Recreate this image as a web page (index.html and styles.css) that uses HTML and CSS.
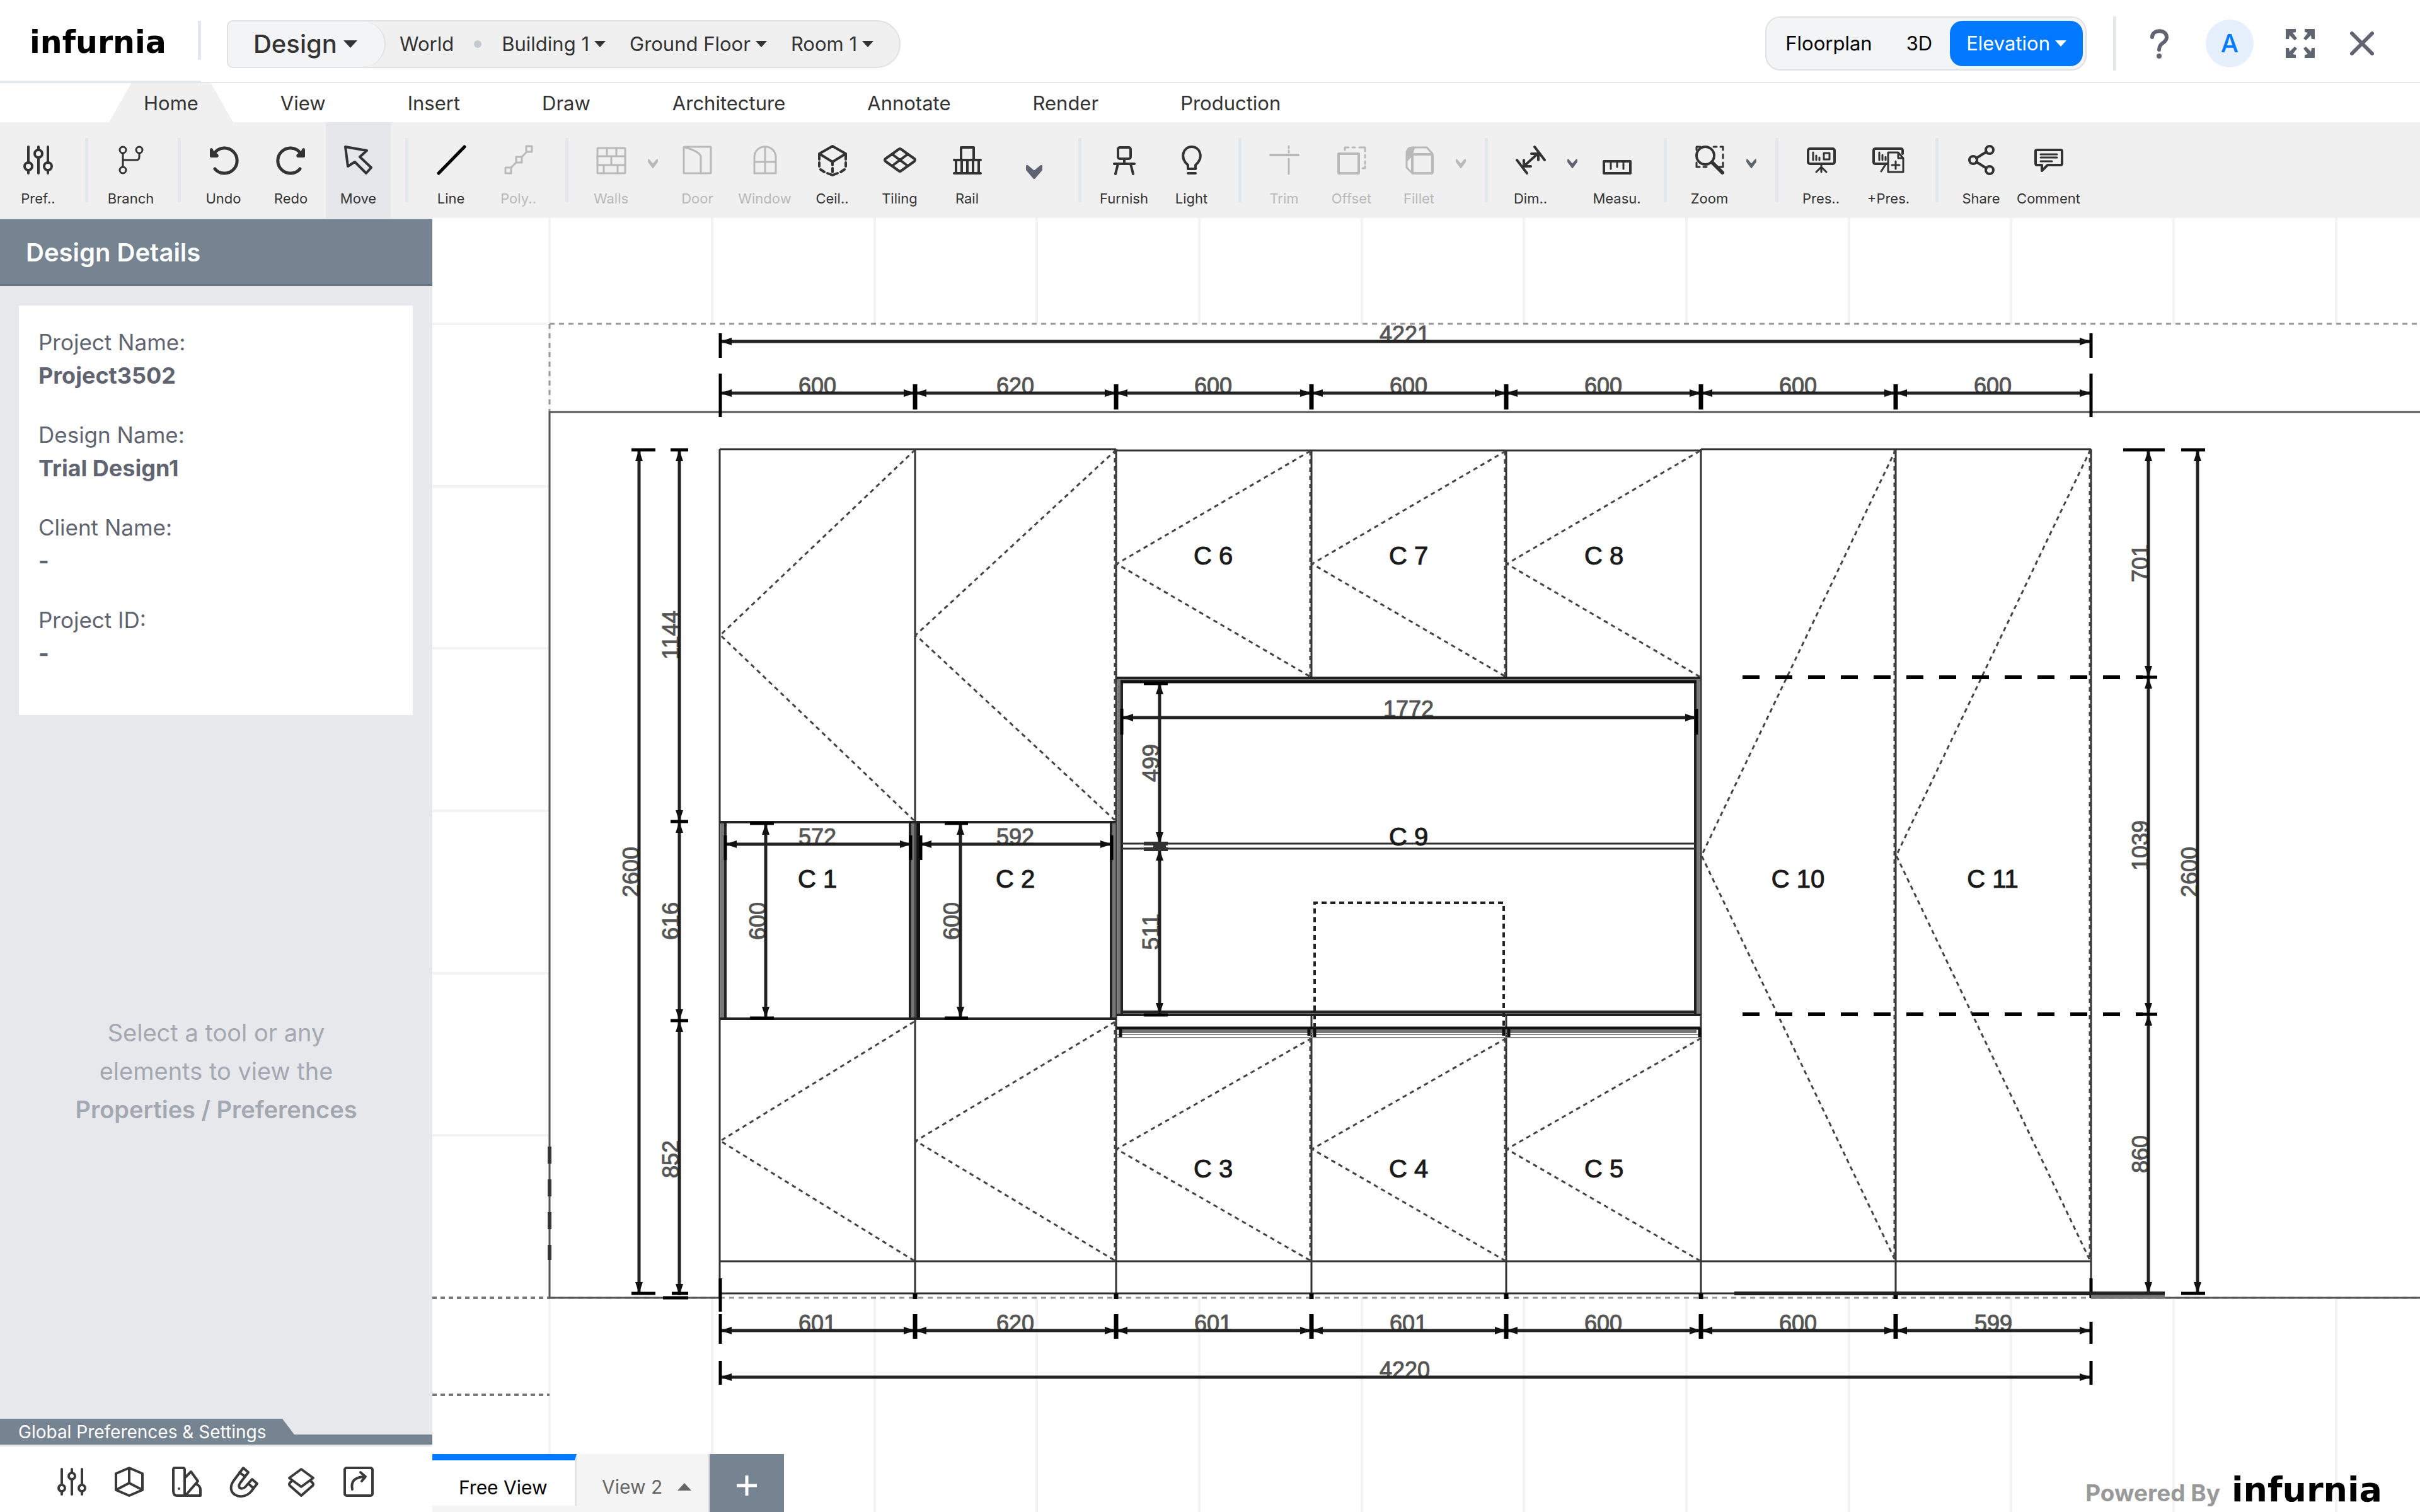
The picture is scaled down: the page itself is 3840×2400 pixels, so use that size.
FILE: index.html
```html
<!DOCTYPE html>
<html lang="en">
<head>
<meta charset="utf-8">
<title>Infurnia - Trial Design1</title>
<link rel="stylesheet" href="styles.css">
</head>
<body>
<header class="topbar">
  <div class="brand"><a class="logo" href="#">infurnia</a><span class="brand-rule"></span></div>
  <nav class="crumbs" aria-label="Location">
    <button class="crumb-mode">Design<span class="caret caret-lg"></span></button>
    <button class="crumb">World</button>
    <span class="crumb-dot"></span>
    <button class="crumb">Building 1<span class="caret"></span></button>
    <button class="crumb">Ground Floor<span class="caret"></span></button>
    <button class="crumb">Room 1<span class="caret"></span></button>
  </nav>
  <div class="modes">
    <button class="mode">Floorplan</button>
    <button class="mode">3D</button>
    <button class="mode mode-on">Elevation<span class="caret"></span></button>
  </div>
  <span class="top-rule"></span>
  <div class="actions">
    <button class="action" aria-label="Help"><svg class="ico" viewBox="0 0 48 48"><path class="w6" d="M13 14C13 1 36 1 36 14C36 24 24 22 24 34"/><circle class="solid" cx="24" cy="44" r="4"/></svg></button>
    <button class="avatar">A</button>
    <button class="action" aria-label="Full screen"><svg class="ico" viewBox="0 0 48 48"><path class="solid" d="M1 1h16v5l-5 1 7 9-4 3-8-8-1 6H1zM47 1H31v5l5 1-7 9 4 3 8-8 1 6h5zM1 47h16v-5l-5-1 7-9-4-3-8 8-1-6H1zM47 47H31v-5l5-1-7-9 4-3 8 8 1-6h5z"/></svg></button>
    <button class="action" aria-label="Close"><svg class="ico" viewBox="0 0 48 48"><path class="w6" d="M8 8L40 40M40 8L8 40"/></svg></button>
  </div>
</header>

<nav class="tabs" aria-label="Ribbon">
  <a class="tab tab-on" href="#">Home</a><a class="tab" href="#">View</a><a class="tab" href="#">Insert</a><a class="tab" href="#">Draw</a><a class="tab" href="#">Architecture</a><a class="tab" href="#">Annotate</a><a class="tab" href="#">Render</a><a class="tab" href="#">Production</a>
</nav>

<div class="toolbar" role="toolbar">
  <button class="tool"><svg class="ico" viewBox="0 0 48 48"><path d="M8 3v24M8 40v5M24 3v5M24 21v24M39 3v24M39 40v5"/><circle cx="8" cy="34" r="6"/><circle cx="24" cy="14" r="6"/><circle cx="39" cy="34" r="6"/></svg>Pref..</button>
  <span class="rule"></span>
  <button class="tool"><svg class="ico" viewBox="0 0 48 48"><g class="w3"><circle cx="11" cy="8" r="5"/><circle cx="37" cy="8" r="5"/><circle cx="11" cy="40" r="5"/><path d="M11 14v20M11 24h21q5 0 5-5v-5"/></g></svg>Branch</button>
  <span class="rule"></span>
  <button class="tool"><svg class="ico" viewBox="0 0 48 48"><path class="w5" d="M10 38A20 20 0 1 0 10 12"/><path class="solid" d="M2 7Q4 3 7 7L8 10L15 15Q17 18 14 20H4Q2 20 2 18z"/></svg>Undo</button>
  <button class="tool"><svg class="ico" viewBox="0 0 48 48"><path class="w5" d="M38 38A20 20 0 1 1 38 12"/><path class="solid" d="M46 7Q44 3 41 7L40 10L33 15Q31 18 34 20H44Q46 20 46 18z"/></svg>Redo</button>
  <button class="tool tool-on"><svg class="ico" viewBox="0 0 48 48"><path d="M3 3L37 9L26 19L44 36L36 45L18 27L7 34z"/></svg>Move</button>
  <span class="rule"></span>
  <button class="tool"><svg class="ico black" viewBox="0 0 48 48"><path class="w5" d="M4 45L45 3"/></svg>Line</button>
  <button class="tool" disabled><svg class="ico" viewBox="0 0 48 48"><g class="w3"><rect x="36" y="2" width="9" height="9"/><rect x="20" y="19" width="9" height="9"/><rect x="3" y="36" width="9" height="9"/><path d="M12 36l8-8M29 19l8-8"/></g></svg>Poly..</button>
  <span class="rule"></span>
  <button class="tool" disabled><svg class="ico" viewBox="0 0 48 48"><g class="w3"><rect x="2" y="5" width="44" height="40" rx="1"/><path d="M2 18h44M2 32h44M17 5v13M32 5v13M24 18v14M12 32v13M34 32v13"/></g></svg>Walls</button>
  <button class="more" disabled aria-label="More walls"><svg class="chev" viewBox="0 0 16 14"><path d="M2 2L8 9L14 2L14 5L8 13L2 5z"/></svg></button>
  <button class="tool" disabled><svg class="ico" viewBox="0 0 48 48"><g class="w3"><rect x="2" y="3" width="43" height="42" rx="1"/><path d="M4 4Q26 10 29 18V45"/></g></svg>Door</button>
  <button class="tool" disabled><svg class="ico" viewBox="0 0 48 48"><g class="w3"><path d="M7 45V20C7-3 41-3 41 20V45zM7 27H41M24 3V45"/></g></svg>Window</button>
  <button class="tool"><svg class="ico" viewBox="0 0 48 48"><path d="M24 2L45 14L24 27L3 14zM3 14v9M45 14v9M24 27v5"/><path d="M3 28v6M45 28v6M24 37v6M5 39l6 4M43 39l-6 4M16 45l8 3l8-3"/></svg>Ceil..</button>
  <button class="tool"><svg class="ico" viewBox="0 0 48 48"><path d="M22 7Q24 5 26 7L47 22Q49 24 47 26L26 41Q24 43 22 41L1 26Q-1 24 1 22zM12 15L36 33M36 15L12 33"/></svg>Tiling</button>
  <button class="tool"><svg class="ico" viewBox="0 0 48 48"><path d="M14 24V4H34V24M3 24H45M3 45H45M6 24V45M15 24V45M24 24V45M33 24V45M42 24V45"/></svg>Rail</button>
  <button class="more more-lg" aria-label="More tools"><svg class="chev chev-lg" viewBox="0 0 16 14"><path d="M2 2L8 7L14 2L14 5L8 12L2 5z"/></svg></button>
  <span class="rule"></span>
  <button class="tool"><svg class="ico" viewBox="0 0 48 48"><rect x="14" y="4" width="20" height="18" rx="3"/><path d="M24 22v8M8 30H40M14 30L10 46M34 30L38 46"/></svg>Furnish</button>
  <button class="tool"><svg class="ico" viewBox="0 0 48 48"><path d="M18 38V32C4 20 11 3 24 3S44 20 30 32V38zM18 45H30"/></svg>Light</button>
  <span class="rule"></span>
  <button class="tool" disabled><svg class="ico" viewBox="0 0 48 48"><path d="M2 16H46"/><path class="w3" d="M31 2v3M31 9v3M31 22V46"/></svg>Trim</button>
  <button class="tool" disabled><svg class="ico" viewBox="0 0 48 48"><rect x="3" y="14" width="32" height="31"/><path class="w3" d="M13 8V4h6M25 4h4M36 4h9v6M45 16v4M45 26v4M45 34v3h-4"/></svg>Offset</button>
  <button class="tool" disabled><svg class="ico" viewBox="0 0 48 48"><rect x="13" y="15" width="32" height="30" rx="2"/><path class="w3" d="M13 45L4 36V14Q4 4 14 4H36L45 14"/><path class="solid" d="M4 14Q4 4 18 4Q15 8 14 17L5 26z"/></svg>Fillet</button>
  <button class="more" disabled aria-label="More edits"><svg class="chev" viewBox="0 0 16 14"><path d="M2 2L8 9L14 2L14 5L8 13L2 5z"/></svg></button>
  <span class="rule"></span>
  <button class="tool"><svg class="ico" viewBox="0 0 48 48"><path d="M30 3L46 24M2 24L18 45M14 33L35 14M25 14H36V24M13 24V34H24"/></svg>Dim..</button>
  <button class="more" aria-label="More dimensions"><svg class="chev" viewBox="0 0 16 14"><path d="M2 2L8 9L14 2L14 5L8 13L2 5z"/></svg></button>
  <button class="tool"><svg class="ico" viewBox="0 0 48 48"><rect x="3" y="26" width="42" height="19"/><path class="w3" d="M14 26v12M24 26v9M34 26v12"/></svg>Measu.</button>
  <span class="rule"></span>
  <button class="tool"><svg class="ico" viewBox="0 0 48 48"><path class="w3" d="M3 8V3h6M30 3h5M41 3h4v5M45 15v6M45 28v7M3 28v7h5M14 35h5M37 35h8"/><circle cx="17" cy="17" r="14"/><path class="w6" d="M28 28L44 44"/></svg>Zoom</button>
  <button class="more" aria-label="More zoom"><svg class="chev" viewBox="0 0 16 14"><path d="M2 2L8 9L14 2L14 5L8 13L2 5z"/></svg></button>
  <span class="rule"></span>
  <button class="tool"><svg class="ico" viewBox="0 0 48 48"><rect x="3" y="6" width="42" height="24" rx="3"/><path class="w3" d="M24 30v13M24 35l-8 8M24 35l8 8M11 12v12M16 17v7M21 20v4M28 13h9v10h-9z"/></svg>Pres..</button>
  <button class="tool"><svg class="ico" viewBox="0 0 48 48"><path d="M22 30H3Q0 30 0 27V9Q0 6 3 6H43Q46 6 46 9V14"/><path class="w3" d="M19 31l-7 11M9 12v12M14 16v8M19 19v5M23 12H39L47 21V43H23zM39 12v9h8M35 26v12M29 32h12"/></svg>+Pres.</button>
  <span class="rule"></span>
  <button class="tool"><svg class="ico" viewBox="0 0 48 48"><circle cx="37" cy="8" r="6"/><circle cx="11" cy="24" r="6"/><circle cx="37" cy="40" r="6"/><path d="M16 21l16-10M16 27l16 10"/></svg>Share</button>
  <button class="tool"><svg class="ico" viewBox="0 0 48 48"><path d="M5 8H43Q45 8 45 10V29Q45 32 43 32H22L13 41V32H5Q3 32 3 29V10Q3 8 5 8z"/><path class="w3" d="M11 15H37M11 20H37M11 26H29"/></svg>Comment</button>
</div>

<main class="workspace">
  <aside class="sidebar">
    <h1 class="side-title">Design Details</h1>
    <dl class="details">
      <div><dt>Project Name:</dt><dd>Project3502</dd></div>
      <div><dt>Design Name:</dt><dd>Trial Design1</dd></div>
      <div><dt>Client Name:</dt><dd>-</dd></div>
      <div><dt>Project ID:</dt><dd>-</dd></div>
    </dl>
    <div class="hint"><p>Select a tool or any<br>elements to view the<br><strong>Properties / Preferences</strong></p></div>
    <h2 class="global">Global Preferences &amp; Settings</h2>
    <div class="global-tools">
      <button class="action" aria-label="Preferences"><svg class="ico dark" viewBox="0 0 48 48"><path d="M8 4v24M8 40v4M24 4v5M24 21v23M40 4v24M40 40v4"/><circle cx="8" cy="34" r="5"/><circle cx="24" cy="15" r="5"/><circle cx="40" cy="34" r="5"/></svg></button>
      <button class="action" aria-label="Models"><svg class="ico dark" viewBox="0 0 48 48"><path d="M24 2L45 11V37L24 46L3 37V11zM24 2V26M3 37L24 26L45 37"/></svg></button>
      <button class="action" aria-label="Materials"><svg class="ico dark" viewBox="0 0 48 48"><path d="M5 2H18Q21 2 21 5V46H9Q3 46 3 38V5Q3 2 5 2zM21 18L31 8L42 23L23 45M40 28Q46 31 46 36V46H16"/><circle class="solid" cx="12" cy="35" r="2"/></svg></button>
      <button class="action" aria-label="Snapping"><svg class="ico dark" viewBox="0 0 48 48"><path d="M23 2L31 9L18 26C12 35 23 38 28 30L37 20L45 27L35 40C20 56-7 43 8 22zM17 9L26 16M31 27L39 34"/></svg></button>
      <button class="action" aria-label="Layers"><svg class="ico dark" viewBox="0 0 48 48"><path d="M24 4L43 18L24 32L5 18zM8 24Q2 28 8 32L24 46L40 32Q46 28 40 24"/></svg></button>
      <button class="action" aria-label="Export"><svg class="ico dark" viewBox="0 0 48 48"><rect x="2" y="2" width="44" height="44" rx="3"/><path d="M14 36Q10 17 33 16M27 9L35 16L29 23"/></svg></button>
    </div>
  </aside>

  <section class="canvas" aria-label="Elevation">
    <svg class="drawing" viewBox="686 346 3154 2054" preserveAspectRatio="xMinYMin slice">
      <defs>
        <marker id="arrow" markerUnits="userSpaceOnUse" markerWidth="18" markerHeight="12" refX="18" refY="6" orient="auto-start-reverse"><path class="head" d="M0 0L18 6L0 12z"/></marker>
      </defs>
      <!-- background grid -->
      <path class="grid" d="M872 346V2400M1130 346V2400M1388 346V2400M1645 346V2400M1903 346V2400M2161 346V2400M2418 346V2400M2676 346V2400M2934 346V2400M3191 346V2400M3449 346V2400M3707 346V2400M686 514H872M686 772H872M686 1029H872M686 1287H872M686 1545H872M686 1802H872"/>
      <rect class="sheet" x="874" y="514" width="2966" height="1546"/>
      <!-- room outline -->
      <path class="dots" d="M872 514H3840M872 514V654"/>
      <path class="dots heavy" d="M686 2060H872M686 2214H872"/>
      <path class="dots" d="M872 2060H3840"/>
      <path class="wall" d="M3840 654H872V2060H1142M3318 2060H3840"/>
      <path class="cut" d="M872 1820V2000"/>

      <!-- dimension values -->
      <g class="value">
        <text x="2229" y="543">4221</text>
        <text x="1297" y="625">600</text><text x="1611" y="625">620</text><text x="1925" y="625">600</text><text x="2235" y="625">600</text><text x="2544" y="625">600</text><text x="2853" y="625">600</text><text x="3162" y="625">600</text>
        <text x="1297" y="2113">601</text><text x="1611" y="2113">620</text><text x="1925" y="2113">601</text><text x="2235" y="2113">601</text><text x="2544" y="2113">600</text><text x="2853" y="2113">600</text><text x="3163" y="2113">599</text>
        <text x="2229" y="2187">4220</text>
        <text x="1297" y="1341">572</text><text x="1611" y="1341">592</text><text x="2235" y="1138">1772</text>
        <text transform="translate(1014 1384) rotate(-90)">2600</text>
        <text transform="translate(1077 1008) rotate(-90)">1144</text>
        <text transform="translate(1077 1462) rotate(-90)">616</text>
        <text transform="translate(1077 1840) rotate(-90)">852</text>
        <text transform="translate(1215 1462) rotate(-90)">600</text>
        <text transform="translate(1523 1462) rotate(-90)">600</text>
        <text transform="translate(1839 1211) rotate(-90)">499</text>
        <text transform="translate(1839 1479) rotate(-90)">511</text>
        <text transform="translate(3409 894) rotate(-90)">701</text>
        <text transform="translate(3409 1342) rotate(-90)">1039</text>
        <text transform="translate(3409 1832) rotate(-90)">860</text>
        <text transform="translate(3487 1384) rotate(-90)">2600</text>
      </g>

      <!-- cabinets -->
      <path class="edge" d="M1142 713H1771M1771 715H2699M2699 713H3318M1142 713V2060M1452 713V2060M1771 713V2060M2081 714V1075M2390 714V1075M2081 1609V2060M2390 1609V2060M2699 713V2060M3008 713V2060M3318 713V2060M1142 2002H3318M1142 2053H3318"/>
      <path class="swing" d="M1452 714L1143 1008L1450 1302M1771 714L1453 1008L1769 1302M1450 1622L1143 1811L1452 2002M1769 1622L1453 1811L1771 2002"/>
      <path class="swing" d="M2079 716L1772 895L2079 1074M2389 716L2082 895L2389 1074M2697 716L2391 895L2697 1074M2081 1648L1772 1824L2081 2002M2390 1648L2082 1824L2390 2002M2699 1648L2391 1824L2699 2002"/>
      <path class="swing" d="M3008 714L2700 1358L3008 2002M3317 714L3009 1358L3317 2002"/>
      <path class="swing" d="M1769 714V1302M1769 1622V2002M2079 716V1074M2388 716V1074M2079 1648V2002M2388 1648V2002M3006 714V2002M3316 714V2002"/>

      <!-- open niches C1, C2 -->
      <path class="board" d="M1147 1305V1618M1448 1305V1618M1766 1305V1618"/>
      <path class="board-black" d="M1457 1305V1618"/>
      <path class="rim" d="M1142 1305H1771M1142 1617H1771M1151 1305V1618M1444 1305V1618M1763 1305V1618"/>

      <!-- counter niche C9 -->
      <path class="board" d="M1776 1078V1611M2694 1078V1611M1774 1609H2696M1772 1079H2698"/>
      <path class="rim" d="M1772 1076H2698M1780 1080V1611M2690 1080V1611M1780 1606H2690M1772 1611H2698"/>
      <path class="rim-heavy" d="M1778 1082H2692M1772 1632H2698"/>
      <path class="edge" d="M1780 1339H2690M1780 1347H2690"/>
      <path class="board" d="M1778 1637H2692"/>
      <path class="faint" d="M1772 1642H2698M1772 1647H2698"/>
      <path class="rim-heavy" d="M1778 1632V1646M2077 1632V1644M2086 1632V1646M2386 1632V1644M2394 1632V1646M2697 1632V1646"/>
      <path class="hob" d="M2086 1632V1433H2386V1632"/>

      <!-- horizontal dimensions -->
      <g class="dim">
        <path d="M1143 542H3318"/>
        <path d="M1143 624H1452"/><path d="M1452 624H1771"/><path d="M1771 624H2081"/><path d="M2081 624H2390"/><path d="M2390 624H2699"/><path d="M2699 624H3008"/><path d="M3008 624H3318"/>
        <path d="M1143 2112H1452"/><path d="M1452 2112H1771"/><path d="M1771 2112H2081"/><path d="M2081 2112H2390"/><path d="M2390 2112H2699"/><path d="M2699 2112H3008"/><path d="M3008 2112H3318"/>
        <path d="M1143 2186H3318"/>
        <path d="M1151 1340H1446"/><path d="M1460 1340H1764"/><path d="M1780 1139H2692"/>
      </g>
      <!-- vertical dimensions -->
      <g class="dim">
        <path d="M1014 714V2053"/>
        <path d="M1078 714V1304"/><path d="M1078 1304V1620"/><path d="M1078 1620V2056"/>
        <path d="M1215 1307V1616"/><path d="M1524 1307V1616"/>
        <path d="M1840 1084V1339"/><path d="M1840 1348V1610"/>
        <path d="M3409 714V1075"/><path d="M3409 1075V1610"/><path d="M3409 1610V2053"/>
        <path d="M3487 714V2053"/>
      </g>
      <path class="tick" d="M1143 529V568M3318 529V568M1143 593V662M3318 593V662M1143 2029V2082M3318 2029V2060M1143 2086V2133M3318 2098V2133M1143 2160V2198M3318 2160V2198M1151 1326V1365M1445 1326V1365M1461 1326V1365M1764 1326V1365M1780 1125V1166M2692 1125V1166"/>
      <path class="tick" d="M1002 714H1040M1002 2053H1040M1064 714H1092M1064 1304H1092M1064 1620H1092M1066 2053H1092M1052 2060H1092M1190 1307H1228M1190 1616H1228M1499 1307H1536M1499 1616H1536M1815 1085H1853M1815 1611H1853M3369 714H3435M3461 714H3499M3461 2053H3499M3394 1075H3423M3394 1610H3423"/>
      <path class="tick wide" d="M1452 610V650M1771 610V650M2081 610V650M2390 610V650M2699 610V650M3008 610V650M1452 2086V2125M1771 2086V2125M2081 2086V2125M2390 2086V2125M2699 2086V2125M3008 2086V2125M1452 2053V2062M1771 2053V2062M2081 2053V2062M2390 2053V2062M2699 2053V2062M3008 2053V2062"/>
      <path class="shelf-tick" d="M1815 1339H1853M1815 1348H1853M1830 1344H1850"/>
      <path class="level" d="M2765 1075H3400M2765 1610H3400"/>
      <path class="base" d="M2752 2053H3435"/>
      <path class="base-soft" d="M3318 2058H3435"/>

      <!-- cabinet labels -->
      <g class="label">
        <text x="1297" y="1409">C 1</text><text x="1611" y="1409">C 2</text>
        <text x="1925" y="1869">C 3</text><text x="2235" y="1869">C 4</text><text x="2545" y="1869">C 5</text>
        <text x="1925" y="896">C 6</text><text x="2235" y="896">C 7</text><text x="2545" y="896">C 8</text>
        <text x="2235" y="1342">C 9</text><text x="2853" y="1409">C 10</text><text x="3162" y="1409">C 11</text>
      </g>
    </svg>
    <nav class="views" aria-label="Views">
      <button class="view view-on">Free View</button>
      <button class="view">View 2<span class="caret caret-up"></span></button>
      <button class="view-add" aria-label="Add view"><svg class="plus" viewBox="0 0 32 32"><path d="M16 0V32M0 16H32"/></svg></button>
    </nav>
    <p class="powered">Powered By <span class="logo logo-lg">infurnia</span></p>
  </section>
</main>
</body>
</html>
```
FILE: styles.css
```css
* { box-sizing: border-box; }

body {
  margin: 0;
  min-height: 100vh;
  display: flex;
  flex-direction: column;
  background: #fff;
  color: #333;
  font: 31px/40px Inter, "Liberation Sans", sans-serif;
}

button {
  margin: 0;
  padding: 0;
  border: 0;
  background: none;
  color: inherit;
  font: inherit;
  white-space: nowrap;
}

a { color: inherit; text-decoration: none; }
h1, h2, p, dl, dd { margin: 0; }

.ico {
  display: block;
  width: 48px;
  height: 48px;
  overflow: visible;
  fill: none;
  stroke: currentColor;
  stroke-width: 4;
  stroke-linecap: round;
  stroke-linejoin: round;
}
.ico .w3 { stroke-width: 3; }
.ico .w5 { stroke-width: 5; }
.ico .w6 { stroke-width: 6; }
.ico .solid { fill: currentColor; stroke: none; }
.black { color: #000; }
.dark { color: #3a3a3a; }

.caret {
  width: 0;
  height: 0;
  border: 9px solid transparent;
  border-top: 10px solid currentColor;
  border-bottom: 0;
}
.caret-lg { border-width: 12px 11px 0; }
.caret-up { border-width: 0 11px 12px; border-bottom: 12px solid currentColor; }

.logo {
  color: #000;
  font: bold 49px/50px "DejaVu Sans", sans-serif;
}
.logo-lg { font-size: 54px; }

/* top bar */
.topbar {
  height: 132px;
  display: flex;
  align-items: center;
  border-bottom: 2px solid #e5e7ea;
}
.brand {
  width: 319px;
  height: 131px;
  padding-left: 47px;
  display: flex;
  align-items: center;
  justify-content: space-between;
  border-bottom: 3px solid #e1e7ea;
}
.brand .logo { padding-top: 8px; }
.brand-rule { width: 5px; height: 62px; background: #e2e8ec; }
.crumbs {
  height: 76px;
  margin: 10px 0 0 41px;
  padding-right: 41px;
  display: flex;
  align-items: center;
  gap: 38px;
  border: 2px solid #dfe1e3;
  border-radius: 10px 38px 38px 10px;
  background: #f0f0f0;
}
.crumb-mode {
  width: 250px;
  height: 72px;
  margin-right: -16px;
  padding-left: 40px;
  display: flex;
  align-items: center;
  gap: 10px;
  border-right: 2px solid #dfe1e3;
  border-radius: 8px 36px 36px 8px;
  background: #f3f4f6;
  font-size: 40px;
  font-weight: 500;
}
.crumb { display: flex; align-items: center; gap: 8px; }
.crumb-dot { width: 12px; height: 12px; margin: 0 -6px; border-radius: 50%; background: #c5cad0; }
.modes {
  height: 86px;
  margin: 8px 0 0 auto;
  padding: 0 4px 0 30px;
  display: flex;
  align-items: center;
  border: 2px solid #e0e1e3;
  border-radius: 24px;
  background: #f3f4f6;
  color: #000;
}
.mode { height: 72px; display: flex; align-items: center; gap: 8px; margin-right: 54px; }
.mode + .mode { margin-right: 28px; }
.mode + .mode-on { margin-right: 0; padding: 0 26px; border-radius: 20px; background: #0078ff; color: #fff; }
.top-rule { width: 5px; height: 86px; margin: 8px 44px 0 42px; background: #e2e8ec; }
.actions { margin: 8px 68px 0 0; display: flex; align-items: center; gap: 50px; color: #5f6470; }
.avatar { width: 76px; height: 76px; border-radius: 50%; background: #e5f0fc; color: #0078ff; font-size: 40px; font-weight: 500; }

/* ribbon tabs */
.tabs { height: 62px; padding-left: 173px; display: flex; gap: 20px; }
.tab { padding: 12px 55px 0; line-height: 40px; }
.tab-on { background: #f0f0f0; clip-path: polygon(35px 0, calc(100% - 35px) 0, 100% 100%, 0 100%); }

/* toolbar */
.toolbar {
  height: 152px;
  padding: 0 9px;
  display: flex;
  align-items: center;
  gap: 4px;
  background: #f0f0f0;
}
.tool {
  width: 103px;
  height: 152px;
  padding-top: 36px;
  flex: none;
  display: flex;
  flex-direction: column;
  align-items: center;
  gap: 23px;
  font-size: 22px;
  line-height: 28px;
}
.tool-on { background: #e5e7eb; }
.tool:disabled, .more:disabled { color: #b9b9b9; }
.rule { width: 5px; height: 102px; margin: 0 12px 0 19px; flex: none; background: #e3e7ec; }
.more { width: 26px; flex: none; color: #5f6470; padding: 0 0 22px 2px; }
.more-lg { width: 98px; padding: 6px 0 0 36px; }
.chev { display: block; width: 18px; height: 16px; fill: currentColor; stroke: currentColor; stroke-width: 2; stroke-linejoin: round; }
.chev-lg { width: 30px; height: 26px; }

/* workspace */
.workspace { flex: 1; display: flex; min-height: 0; }
.sidebar {
  width: 686px;
  flex: none;
  display: flex;
  flex-direction: column;
  border-top: 2px solid #e5e8ec;
  background: #e6e8ec;
}
.side-title {
  height: 106px;
  padding: 0 41px;
  border-bottom: 3px solid #67747f;
  background: #768391;
  color: #fff;
  font-size: 40px;
  font-weight: 600;
  line-height: 106px;
}
.details {
  margin: 31px 31px 0 30px;
  padding: 32px 31px 71px;
  display: flex;
  flex-direction: column;
  gap: 41px;
  background: #fff;
  color: #5f6470;
  font-size: 35px;
  line-height: 53px;
}
.details dd { font-size: 36px; font-weight: 700; }
.hint {
  flex: 1;
  padding-top: 14px;
  display: flex;
  align-items: center;
  justify-content: center;
  text-align: center;
  color: #a3a8b0;
  font-size: 38px;
  line-height: 61px;
}
.hint strong { font-weight: 600; }
.global {
  height: 41px;
  padding-left: 29px;
  background: #768391;
  clip-path: polygon(0 0, 448px 0, 467px 25px, 100% 25px, 100% 100%, 0 100%);
  color: #fff;
  font-size: 28px;
  font-weight: 400;
  line-height: 43px;
}
.global-tools {
  height: 107px;
  padding: 8px 0 0 90px;
  display: flex;
  align-items: center;
  gap: 43px;
  border-top: 3px solid #dfe3e8;
  background: #fff;
}

/* drawing canvas */
.canvas { position: relative; flex: 1; min-width: 0; overflow: hidden; background: #fff; }
.drawing { position: absolute; width: 100%; height: 100%; fill: none; }
.grid { stroke: #f3f3f3; stroke-width: 4; }
.sheet { fill: #fff; }
.dots { stroke: #999; stroke-width: 3; stroke-dasharray: 8 7; }
.heavy { stroke: #777; stroke-width: 4; stroke-dasharray: 7 6; }
.wall { stroke: #555; stroke-width: 3; }
.cut { stroke: #333; stroke-width: 6; stroke-dasharray: 27 25; }
.edge { stroke: #333; stroke-width: 3; }
.swing { stroke: #444; stroke-width: 3; stroke-dasharray: 7 6; }
.board { stroke: #777; stroke-width: 6; }
.board-black { stroke: #111; stroke-width: 6; }
.rim { stroke: #222; stroke-width: 4; }
.rim-heavy { stroke: #111; stroke-width: 5; }
.faint { stroke: #888; stroke-width: 2; }
.hob { stroke: #222; stroke-width: 4; stroke-dasharray: 8 6; }
.dim path { stroke: #222; stroke-width: 5; marker-start: url(#arrow); marker-end: url(#arrow); }
.head { fill: #111; }
.tick { stroke: #000; stroke-width: 5; }
.wide { stroke-width: 7; }
.shelf-tick { stroke: #333; stroke-width: 6; }
.level { stroke: #000; stroke-width: 6; stroke-dasharray: 27 25; }
.base { stroke: #222; stroke-width: 6; }
.base-soft { stroke: #777; stroke-width: 5; }
.value text, .label text { font-family: "Liberation Sans", Arial, sans-serif; text-anchor: middle; }
.value text { fill: #555; stroke: #555; stroke-width: 1; font-size: 36px; }
.label text { fill: #1a1a1a; stroke: #1a1a1a; stroke-width: 1; font-size: 40px; }

.views { position: absolute; left: 0; bottom: 0; height: 92px; display: flex; background: #f4f4f4; font-size: 30px; }
.view {
  height: 92px;
  width: 211px;
  padding-left: 40px;
  display: flex;
  align-items: center;
  gap: 24px;
  padding-top: 12px;
  border-right: 3px solid #e2e4e6;
  color: #666;
}
.view-on { width: 229px; height: 82px; padding: 14px 0 0 42px; border-top: 10px solid #0078ff; background: #fff; color: #000; }
.view-add { width: 118px; background: #768391; display: grid; place-items: center; padding-top: 8px; }
.plus { width: 32px; height: 32px; stroke: #fff; stroke-width: 5; }
.powered {
  position: absolute;
  right: 60px;
  bottom: 10px;
  display: flex;
  align-items: baseline;
  gap: 18px;
  color: #999;
  font-size: 37px;
  font-weight: 700;
}
```
